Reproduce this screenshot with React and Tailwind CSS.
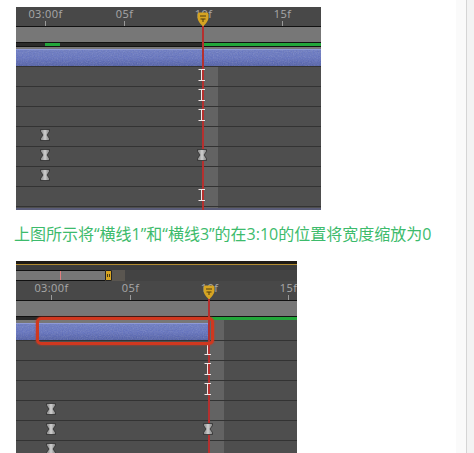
const Hourglass = () => (
  <svg width="10" height="12" viewBox="0 0 10 12" className="shrink-0">
    <defs>
      <linearGradient id="kf" x1="0" y1="0" x2="1" y2="0">
        <stop offset="0" stopColor="#7c7c7c" />
        <stop offset="0.5" stopColor="#cfcfcf" />
        <stop offset="1" stopColor="#7c7c7c" />
      </linearGradient>
    </defs>
    <path d="M0.5 0.5H9.5V2.5L7 6L9.5 9.5V11.5H0.5V9.5L3 6L0.5 2.5Z" fill="url(#kf)" stroke="#2e2e2e" strokeWidth="0.8" />
  </svg>
);

const Beam = () => (
  <svg width="8" height="12" viewBox="0 0 8 12" className="shrink-0">
    <path d="M0.5 0.5H7M0.5 11.5H7M3.5 0.5V11.5" stroke="#f1e6e6" strokeWidth="1" fill="none" />
    <path d="M5 1.5V10.5" stroke="#b5302f" strokeWidth="1" fill="none" />
  </svg>
);

const Head = () => (
  <svg width="12" height="15" viewBox="0 0 12 15" className="block">
    <path d="M0.5 2.5Q0.5 0.5 2.5 0.5H9.5Q11.5 0.5 11.5 2.5V6Q11 10 6 14.5Q1 10 0.5 6Z" fill="#d6a422" />
    <path d="M4 3V5M6 3V5M8 3V5M3.5 7H8.5M6 7V10" stroke="#4a3a10" strokeWidth="1" fill="none" />
  </svg>
);

// speckle on top of the blue layer bar
const Noise = ({ id }) => (
  <svg className="absolute inset-0 h-full w-full opacity-30">
    <filter id={id}>
      <feTurbulence type="fractalNoise" baseFrequency="0.8" numOctaves="2" />
      <feColorMatrix type="saturate" values="0" />
    </filter>
    <rect width="100%" height="100%" filter={`url(#${id})`} />
  </svg>
);

const BlueBar = ({ id, className }) => (
  <div className={`relative overflow-hidden border-t border-[#8f9ad8] bg-linear-to-b from-[#6878c4] via-[#5f6fc0] to-[#4c5ba6] ${className}`}>
    <Noise id={id} />
  </div>
);

// one ruler: ticks are 79px apart, first cell starts off the left edge
const Ruler = ({ startClass }) => (
  <div className="flex h-[19px] overflow-hidden bg-[#484848] border-b border-[#111] box-content">
    <div className={`flex shrink-0 ${startClass}`}>
      {["03:00f", "05f", "10f", "15f"].map((t) => (
        <div key={t} className="flex h-[19px] w-[79px] shrink-0 flex-col items-center justify-between">
          <span className="text-[11px] leading-[13px] tracking-[0.4px] text-[#a8a8a8] font-['Open_Sans',sans-serif]">{t}</span>
          <span className="h-[5px] w-px bg-[#9a9a9a]" />
        </div>
      ))}
    </div>
  </div>
);

const Row = ({ keyClass, left, right }) => (
  <div className="relative flex h-5 items-center border-t border-[#333] pb-[3px]">
    <div className={`flex w-[10px] shrink-0 justify-center ${keyClass}`}>{left && <Hourglass />}</div>
    <div className="relative z-10 ml-[147px] flex w-[10px] shrink-0 justify-center">
      {right === "glass" && <Hourglass />}
      {right === "beam" && <Beam />}
    </div>
  </div>
);

const firstRows = [
  { right: "beam" }, { right: "beam" }, { right: "beam" },
  { left: true }, { left: true, right: "glass" }, { left: true },
  { right: "beam" },
];

const secondRows = [
  { right: "beam" }, { right: "beam" }, { right: "beam" },
  { left: true }, { left: true, right: "glass" }, { left: true },
];

export default function App() {
  return (
    <div className="flex h-[453px] w-[474px] overflow-hidden bg-white">
      <div className="w-[456px] shrink-0 pl-4 pt-[7px]">

        {/* first capture */}
        <div className="relative w-[305px] overflow-hidden">
          <Ruler startClass="-ml-[10px]" />
          <div className="h-[15px] bg-[#777]" />
          <div className="flex h-[5px] border-y border-[#111] bg-[#2a2a2a]">
            <div className="ml-[29px] w-[15px] bg-[#22a63a]" />
            <div className="ml-[143px] flex-1 bg-[#22a63a]" />
          </div>
          <div className="h-[2px] bg-[#777]" />
          <BlueBar id="noise-a" className="h-[17px]" />
          <div className="relative bg-[#4e4e4e]">
            <div className="absolute inset-y-0 left-[187px] w-[15px] bg-[#636363]" />
            {firstRows.map((r, i) => (
              <Row key={i} keyClass="ml-[24px]" left={r.left} right={r.right} />
            ))}
            <div className="relative h-[4px] border-t border-b-2 border-t-[#333] border-b-[#5a5c78]" />
          </div>
          <div className="absolute left-[181px] top-[5px]"><Head /></div>
          <div className="absolute bottom-0 top-[19px] left-[186px] w-[1.5px] bg-[#b5302f]" />
        </div>

        <p className="-ml-[2px] mt-[12px] h-[39px] whitespace-nowrap text-[16px] leading-[24px] text-[#3dbb6c] font-['Open_Sans','Noto_Sans_CJK_SC',sans-serif]">
          上图所示将“横线1”和“横线3”的在3:10的位置将宽度缩放为0
        </p>

        {/* second capture */}
        <div className="relative w-[281px]">
          <div className="h-[3px] bg-[#1e1a14]" />
          <div className="h-px bg-[#b08a30]" />
          <div className="h-[5px] bg-[#3c3c3c]" />
          <div className="flex h-[11px] bg-[#434343]">
            <div className="relative w-[89px] border-y border-[#111] bg-[#777]">
              <div className="absolute inset-y-0 left-[44px] w-px bg-[#e08080]" />
            </div>
            <div className="flex w-[7px] items-center justify-center gap-px rounded-[1px] border border-[#222] bg-[#d6a422]">
              <span className="h-[3px] w-px bg-[#4a3a10]" />
              <span className="h-[3px] w-px bg-[#4a3a10]" />
            </div>
            <div className="w-[13px] bg-[#5a5650]" />
          </div>
          <Ruler startClass="-ml-[4px]" />
          <div className="h-[15px] bg-[#777]" />
          <div className="flex h-[4px] border-t border-[#111] bg-[#2a2a2a]">
            <div className="ml-[194px] flex-1 bg-[#22a63a]" />
          </div>
          <div className="relative bg-[#4e4e4e]">
            <div className="absolute inset-y-0 left-[193px] w-[15px] bg-[#636363]" />
            <div className="relative h-[3px] w-[192px] bg-[#777]" />
            <BlueBar id="noise-b" className="h-[17px] w-[192px]" />
            {secondRows.map((r, i) => (
              <Row key={i} keyClass="ml-[30px]" left={r.left} right={r.right} />
            ))}
          </div>
          <div className="absolute z-20 left-[20px] top-[56px] h-[28px] w-[178px] rounded-[5px] border-[3px] border-[#d0381f] shadow-[0_0_2px_#d0381f]" />
          <div className="absolute left-[187px] top-[24px]"><Head /></div>
          <div className="absolute bottom-0 top-[38px] left-[192px] w-[1.5px] bg-[#b5302f]" />
        </div>
      </div>

      {/* page scrollbar track */}
      <div className="w-[10px] shrink-0 bg-[#fafafa]" />
      <div className="w-px shrink-0 bg-[#d5d5d5]" />
      <div className="flex-1 bg-[#f3f3f3]" />
    </div>
  );
}
